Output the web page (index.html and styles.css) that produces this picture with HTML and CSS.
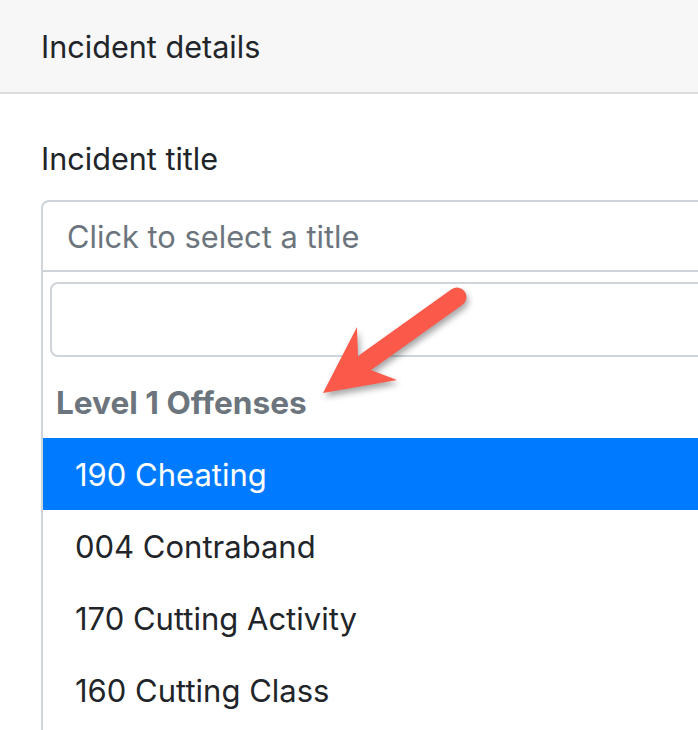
FILE: index.html
```html
<!DOCTYPE html>
<html lang="en">
<head>
<meta charset="utf-8">
<title>Incident details</title>
<link rel="stylesheet" href="styles.css">
</head>
<body>
<div class="page">
  <div class="card-header">Incident details</div>
  <div class="card-body">
    <label class="field-label">Incident title</label>
    <div class="select">
      <div class="select-selection">Click to select a title</div>
      <div class="select-dropdown">
        <div class="search-wrap"><div class="search-input"></div></div>
        <div class="group-label">Level 1 Offenses</div>
        <ul class="options">
          <li class="option active">190 Cheating</li>
          <li class="option">004 Contraband</li>
          <li class="option">170 Cutting Activity</li>
          <li class="option">160 Cutting Class</li>
        </ul>
      </div>
    </div>
  </div>
  <svg class="arrow" width="698" height="730" viewBox="0 0 698 730" aria-hidden="true">
    <line x1="457" y1="297" x2="366" y2="362" stroke="#fb5a4b" stroke-width="19" stroke-linecap="round"/>
    <path d="M323 393 L397 380 L368 369 L358 357 L357 327 Z" fill="#fb5a4b"/>
  </svg>
</div>
</body>
</html>
```
FILE: styles.css
```css
html, body {
  margin: 0;
  padding: 0;
  background: #ffffff;
}
body {
  font-family: Inter, "Noto Sans", "Liberation Sans", sans-serif;
  color: #212529;
  overflow: hidden;
  width: 698px;
  height: 730px;
}
.page {
  position: relative;
  width: 698px;
  height: 730px;
  overflow: hidden;
}
.card-header {
  height: 92px;
  background: #f7f7f7;
  border-bottom: 2px solid #dcdcdc;
  padding-left: 41px;
  display: flex;
  align-items: center;
  font-size: 30.6px;
  box-sizing: content-box;
}
.card-body {
  padding: 0 0 0 41px;
  width: 800px;
}
.field-label {
  display: block;
  font-size: 30.6px;
  height: 106px;
  line-height: 30px;
  padding-top: 50px;
  box-sizing: border-box;
}
.select {
  width: 800px;
}
.select-selection {
  height: 72px;
  box-sizing: border-box;
  border: 2px solid #ced4da;
  border-radius: 8px 0 0 0;
  padding-left: 24px;
  display: flex;
  align-items: center;
  font-size: 30.8px;
  color: #6c757d;
}
.select-dropdown {
  border-left: 2px solid #ced4da;
  padding-bottom: 40px;
}
.search-wrap {
  padding: 10px 0 10px 7px;
}
.search-input {
  height: 75px;
  box-sizing: border-box;
  border: 2px solid #ced4da;
  border-radius: 8px 0 0 8px;
}
.group-label {
  height: 71px;
  display: flex;
  align-items: center;
  padding-left: 13px;
  font-weight: 700;
  font-size: 31.6px;
  color: #6c757d;
}
.options {
  list-style: none;
  margin: 0;
  padding: 0;
}
.option {
  height: 72px;
  display: flex;
  align-items: center;
  padding-left: 32px;
  font-size: 31px;
  color: #212529;
}
.option.active {
  background: #007bff;
  color: #ffffff;
}
.arrow {
  position: absolute;
  left: 0;
  top: 0;
  pointer-events: none;
  filter: drop-shadow(2px 4px 3px rgba(0, 0, 0, 0.35));
}
```
